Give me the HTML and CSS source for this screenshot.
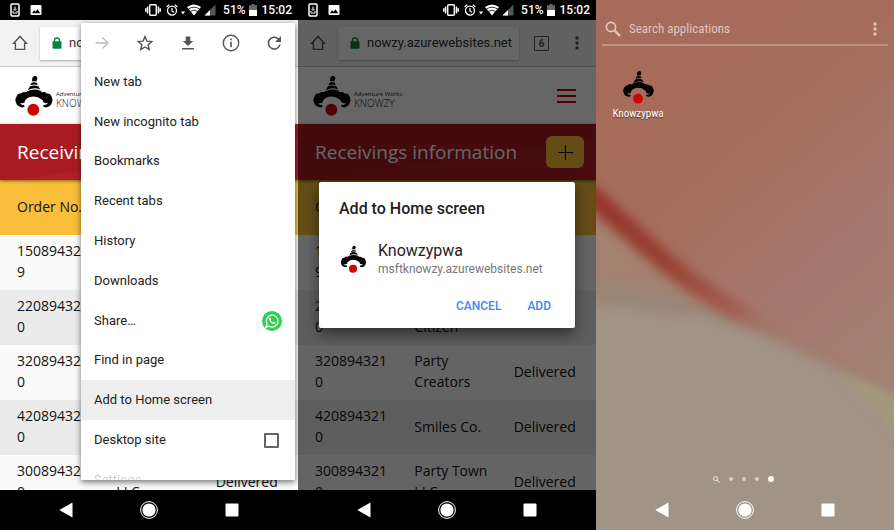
FILE: index.html
```html
<!DOCTYPE html>
<html lang="en">
<head>
<meta charset="utf-8">
<meta name="viewport" content="width=device-width, initial-scale=1">
<title>Knowzy – Add to Home screen</title>
<link rel="stylesheet" href="styles.css">
</head>
<body>
<svg class="sprite" aria-hidden="true">
  <symbol id="logo" viewBox="44 220 114 124">
    <path d="M96 240C94 231 97 223 104 223C111 223 113 231 109 236L109 240C105 239 100 239 96 240Z"/>
    <path d="M93 244Q101 240 110 244L112 250Q101 247 90 251Z"/>
    <path d="M89 254Q101 249 114 254L120 264Q101 256 82 266Z"/>
    <path d="M81 269Q101 259 121 268L125 273Q101 264 77 274Z"/>
    <path d="M75 272Q100 264 126 272Q134 270 140 276Q151 275 154 286Q159 294 155 304Q151 317 136 318L129 315L130 310Q141 312 143 304Q134 308 128 301Q131 298 124 294Q114 285 100 285Q84 285 76 295Q71 298 74 302Q66 308 59 304Q60 312 70 310L73 315L67 318Q51 317 47 305Q42 294 48 286Q51 275 61 276Q67 269 75 272Z"/>
    <circle cx="99" cy="325" r="18" fill="#cc0505"/>
  </symbol>
  <symbol id="home" viewBox="0 0 16 16"><path d="M1.500 8.400L8 1.400L14.500 8.400H12.600V14.400H3.400V8.400Z" fill="none" stroke="currentColor" stroke-width="1.400"/></symbol>
  <symbol id="lock" viewBox="0 0 10 12"><path d="M2.500 5V3.500a2.500 2.500 0 0 1 5 0V5" fill="none" stroke="currentColor" stroke-width="1.300"/><rect x=".5" y="4.300" width="9" height="7.400" rx="1"/></symbol>
  <symbol id="dots" viewBox="0 0 4 14"><circle cx="2" cy="2" r="1.700"/><circle cx="2" cy="7" r="1.700"/><circle cx="2" cy="12" r="1.700"/></symbol>
  <symbol id="search" viewBox="0 0 16 16"><circle cx="6" cy="6" r="4.600" fill="none" stroke="currentColor" stroke-width="1.700"/><path d="M9.400 9.400L15 15" stroke="currentColor" stroke-width="2.200"/></symbol>
  <symbol id="st-phone" viewBox="0 0 10 14"><rect x="1" y="1" width="8" height="12" rx="1" fill="none" stroke="currentColor" stroke-width="1.500"/><path d="M5 3.500V7M3.300 5.800L5 7.500L6.700 5.800M3 8v2h4V8" fill="none" stroke="currentColor" stroke-width="1"/></symbol>
  <symbol id="st-image" viewBox="0 0 12 12"><path fill-rule="evenodd" d="M1.500 1h9a1 1 0 0 1 1 1v8a1 1 0 0 1-1 1h-9a1 1 0 0 1-1-1V2a1 1 0 0 1 1-1ZM2 9.200H10.200L7.500 5.300L5.500 7.800L4 6.300Z"/></symbol>
  <symbol id="st-vibrate" viewBox="0 0 16 12"><rect x="4.700" y=".7" width="6.600" height="10.600" rx="1" fill="none" stroke="currentColor" stroke-width="1.400"/><path d="M2.600 2.500v7M13.400 2.500v7M.8 4.200v3.600M15.200 4.200v3.600" stroke="currentColor" stroke-width="1.500"/></symbol>
  <symbol id="st-alarm" viewBox="0 0 12 12"><circle cx="6" cy="6.600" r="4.500" fill="none" stroke="currentColor" stroke-width="1.300"/><path d="M6 4v3l2 1.200M.6 3L3.200.8M11.400 3L8.800.8" fill="none" stroke="currentColor" stroke-width="1.200"/></symbol>
  <symbol id="st-wifi" viewBox="0 0 20 12"><path d="M0 7.500h4L2 10.500Z"/><path d="M6 3Q13 -2 20 3L13 11.500Z"/><path d="M7.400 5Q13 1.400 18.600 5M9.400 7.400Q13 5 16.600 7.400" fill="none" stroke="#000" stroke-width=".8"/></symbol>
  <symbol id="st-signal" viewBox="0 0 12 12"><path d="M11.500 .5V11.500H.5Z" fill="#555"/><path d="M6 6V11.500H.5Z"/></symbol>
  <symbol id="st-battery" viewBox="0 0 8 12"><path d="M2.500 0h3v1.300H8V12H0V1.300h2.500Z" fill="#666"/><path d="M0 6h8v6H0Z"/></symbol>
  <symbol id="back" viewBox="0 0 14 16"><path d="M13.500 .5V15.500L.3 8Z"/></symbol>
  <symbol id="circle" viewBox="0 0 18 18"><circle cx="9" cy="9" r="8.400" fill="none" stroke="currentColor" stroke-width="1"/><circle cx="9" cy="9" r="6.600"/></symbol>
  <symbol id="square" viewBox="0 0 14 14"><rect x=".5" y=".5" width="13" height="13" rx="1"/></symbol>
</svg>

<main class="phones">
  <section class="phone" aria-label="Browser menu">
    <div class="status">
      <svg class="i-phone"><use href="#st-phone"/></svg><svg class="i-image"><use href="#st-image"/></svg>
      <span class="spacer"></span>
      <svg class="i-vibrate"><use href="#st-vibrate"/></svg><svg class="i-12"><use href="#st-alarm"/></svg><svg class="i-wifi"><use href="#st-wifi"/></svg><svg class="i-12"><use href="#st-signal"/></svg>
      <span class="percent">51%</span><svg class="i-battery"><use href="#st-battery"/></svg><span>15:02</span>
    </div>
    <div class="screen">
      <div class="toolbar">
        <button class="plain" aria-label="Home"><svg class="i-16"><use href="#home"/></svg></button>
        <div class="omnibox"><svg class="lock"><use href="#lock"/></svg><input type="text" dir="rtl" aria-label="Address" value="msftknowzy.azurewebsites.net"></div>
        <button class="tabs" aria-label="Open tabs">6</button>
        <button class="plain" aria-label="Menu"><svg class="i-dots"><use href="#dots"/></svg></button>
      </div>
      <div class="site-header">
        <svg class="logo"><use href="#logo"/></svg>
        <div class="brand"><span class="brand-top">Adventure Works</span><span class="brand-name">KNOWZY</span></div>
        <button class="burger" aria-label="Navigation"><i></i><i></i><i></i></button>
      </div>
      <div class="banner"><h1>Receivings information</h1><button class="plus" aria-label="New receiving"></button></div>
      <table class="orders">
        <thead><tr><th>Order No.</th><th></th><th></th></tr></thead>
        <tbody>
          <tr><td>1508943219</td><td></td><td></td></tr>
          <tr><td>2208943210</td><td><br>Citizen</td><td></td></tr>
          <tr><td>3208943210</td><td>Party Creators</td><td>Delivered</td></tr>
          <tr><td>4208943210</td><td>Smiles Co.</td><td>Delivered</td></tr>
          <tr><td>3008943210</td><td>Party Town LLC</td><td>Delivered</td></tr>
        </tbody>
      </table>
      <div class="menu">
        <div class="menu-icons">
          <button class="plain off" aria-label="Forward"><svg class="i-16" viewBox="0 0 16 16"><path d="M1.500 8H14M8.500 2.500L14 8L8.500 13.500" fill="none" stroke="currentColor" stroke-width="1.300"/></svg></button>
          <button class="plain" aria-label="Bookmark"><svg class="i-16" viewBox="0 0 16 16"><path d="M8 1.500L9.900 6.100L14.800 6.500L11.100 9.700L12.200 14.500L8 12L3.800 14.500L4.900 9.700L1.200 6.500L6.100 6.100Z" fill="none" stroke="currentColor" stroke-width="1.400"/></svg></button>
          <button class="plain" aria-label="Download"><svg class="i-16" viewBox="0 0 16 16"><path d="M5.700 1.500h4.600V6h3L8 11L2.700 6h3ZM2 13h12v1.500H2Z"/></svg></button>
          <button class="plain" aria-label="Page info"><svg class="i-18" viewBox="0 0 18 18"><circle cx="9" cy="9" r="7.700" fill="none" stroke="currentColor" stroke-width="1.400"/><path d="M8.200 4.600h1.600v1.600H8.200ZM8.200 7.700h1.600v5.600H8.200Z"/></svg></button>
          <button class="plain" aria-label="Reload"><svg class="i-16" viewBox="0 0 16 16"><path d="M12.500 4A5.900 5.900 0 1 0 14 9.600" fill="none" stroke="currentColor" stroke-width="1.600"/><path d="M15 1V7H9Z"/></svg></button>
        </div>
        <button class="item">New tab</button>
        <button class="item">New incognito tab</button>
        <button class="item">Bookmarks</button>
        <button class="item">Recent tabs</button>
        <button class="item">History</button>
        <button class="item">Downloads</button>
        <button class="item">Share…<svg class="whatsapp" viewBox="0 0 20 20"><circle cx="10" cy="10" r="10" fill="#2fd04e"/><path d="M4 16.200L5 12.900A5.900 5.900 0 1 1 7.300 15.200Z" fill="none" stroke="#fff" stroke-width="1.300"/><path d="M7.700 6.800C6.100 8.200 8 11 9.800 12.200C11.500 13.400 13 13 13.300 11.400L11.600 10.500L10.700 11.400Q9.200 10.700 8.500 9.300L9.200 8.500L8.500 6.800Z" fill="#fff"/></svg></button>
        <button class="item">Find in page</button>
        <button class="item active">Add to Home screen</button>
        <label class="item">Desktop site<input type="checkbox"></label>
        <div class="peek"><button class="item">Settings</button></div>
      </div>
    </div>
    <nav class="nav"><button class="plain" aria-label="Back"><svg class="i-back"><use href="#back"/></svg></button><button class="plain" aria-label="Home"><svg class="i-18"><use href="#circle"/></svg></button><button class="plain" aria-label="Recents"><svg class="i-square"><use href="#square"/></svg></button></nav>
  </section>

  <section class="phone" aria-label="Add to Home screen prompt">
    <div class="status">
      <svg class="i-phone"><use href="#st-phone"/></svg><svg class="i-image"><use href="#st-image"/></svg>
      <span class="spacer"></span>
      <svg class="i-vibrate"><use href="#st-vibrate"/></svg><svg class="i-12"><use href="#st-alarm"/></svg><svg class="i-wifi"><use href="#st-wifi"/></svg><svg class="i-12"><use href="#st-signal"/></svg>
      <span class="percent">51%</span><svg class="i-battery"><use href="#st-battery"/></svg><span>15:02</span>
    </div>
    <div class="screen">
      <div class="toolbar">
        <button class="plain" aria-label="Home"><svg class="i-16"><use href="#home"/></svg></button>
        <div class="omnibox"><svg class="lock"><use href="#lock"/></svg><input type="text" dir="rtl" aria-label="Address" value="msftknowzy.azurewebsites.net"></div>
        <button class="tabs" aria-label="Open tabs">6</button>
        <button class="plain" aria-label="Menu"><svg class="i-dots"><use href="#dots"/></svg></button>
      </div>
      <div class="site-header">
        <svg class="logo"><use href="#logo"/></svg>
        <div class="brand"><span class="brand-top">Adventure Works</span><span class="brand-name">KNOWZY</span></div>
        <button class="burger" aria-label="Navigation"><i></i><i></i><i></i></button>
      </div>
      <div class="banner"><h1>Receivings information</h1><button class="plus" aria-label="New receiving"></button></div>
      <table class="orders">
        <thead><tr><th>Order No.</th><th></th><th></th></tr></thead>
        <tbody>
          <tr><td>1508943219</td><td></td><td></td></tr>
          <tr><td>2208943210</td><td><br>Citizen</td><td></td></tr>
          <tr><td>3208943210</td><td>Party Creators</td><td>Delivered</td></tr>
          <tr><td>4208943210</td><td>Smiles Co.</td><td>Delivered</td></tr>
          <tr><td>3008943210</td><td>Party Town LLC</td><td>Delivered</td></tr>
        </tbody>
      </table>
      <div class="scrim">
        <div class="dialog" role="dialog" aria-labelledby="dialog-title">
          <h2 id="dialog-title">Add to Home screen</h2>
          <div class="app">
            <svg class="app-icon"><use href="#logo"/></svg>
            <div><p class="app-name">Knowzypwa</p><p class="app-url">msftknowzy.azurewebsites.net</p></div>
          </div>
          <div class="actions"><button>CANCEL</button><button>ADD</button></div>
        </div>
      </div>
    </div>
    <nav class="nav"><button class="plain" aria-label="Back"><svg class="i-back"><use href="#back"/></svg></button><button class="plain" aria-label="Home"><svg class="i-18"><use href="#circle"/></svg></button><button class="plain" aria-label="Recents"><svg class="i-square"><use href="#square"/></svg></button></nav>
  </section>

  <section class="phone launcher" aria-label="App launcher">
    <svg class="wallpaper" viewBox="0 0 298 530" preserveAspectRatio="none" aria-hidden="true">
      <defs>
        <linearGradient id="sky" gradientUnits="userSpaceOnUse" x1="40" y1="60" x2="300" y2="370"><stop offset="0" stop-color="#a76b5b"/><stop offset=".3" stop-color="#a56c5a"/><stop offset=".65" stop-color="#a6786d"/><stop offset="1" stop-color="#a48172"/></linearGradient>
        <linearGradient id="band" gradientUnits="userSpaceOnUse" x1="0" y1="200" x2="178" y2="328"><stop offset="0" stop-color="#953629"/><stop offset=".45" stop-color="#984336"/><stop offset=".8" stop-color="#a15a4d" stop-opacity=".8"/><stop offset="1" stop-color="#a5695e" stop-opacity="0"/></linearGradient>
        <filter id="soft" x="-20%" y="-20%" width="140%" height="140%" color-interpolation-filters="sRGB"><feGaussianBlur stdDeviation="6"/></filter>
        <filter id="soft-band" x="-20%" y="-20%" width="140%" height="140%" color-interpolation-filters="sRGB"><feGaussianBlur stdDeviation="5"/></filter>
      </defs>
      <rect width="298" height="530" fill="url(#sky)"/>
      <path d="M-30 190L0 218L40 252L80 284L120 310L150 327L200 350L240 369L330 418V570H-30Z" fill="#a2826f" filter="url(#soft)"/>
      <path d="M-30 277L0 284L60 290L120 312L150 328L200 351L240 371L330 420V570H-30Z" fill="#998676" filter="url(#soft)"/>
      <path d="M-30 302L0 304L60 312L110 316L150 329L200 352L240 371L330 420V570H-30Z" fill="#a29387" filter="url(#soft)"/>
      <path d="M240 373Q275 381 320 408V455Q282 408 240 373Z" fill="#a39a7b" filter="url(#soft-band)"/>
      <path d="M-30 172L0 200L33 229L67 260L100 285L133 307L178 330" fill="none" stroke="url(#band)" stroke-width="19" filter="url(#soft-band)"/>
    </svg>
    <div class="drawer">
      <label class="search"><svg class="i-16"><use href="#search"/></svg><input type="text" placeholder="Search applications"><svg class="i-dots"><use href="#dots"/></svg></label>
      <div class="apps"><a class="shortcut" href="#"><svg class="shortcut-icon"><use href="#logo"/></svg>Knowzypwa</a></div>
      <div class="pager"><svg class="i-pager"><use href="#search"/></svg><i></i><i></i><i></i><i class="current"></i></div>
    </div>
    <nav class="nav"><button class="plain" aria-label="Back"><svg class="i-back"><use href="#back"/></svg></button><button class="plain" aria-label="Home"><svg class="i-18"><use href="#circle"/></svg></button><button class="plain" aria-label="Recents"><svg class="i-square"><use href="#square"/></svg></button></nav>
  </section>
</main>
</body>
</html>
```
FILE: styles.css
```css
* { box-sizing: border-box; }
body { margin: 0; font-family: Roboto, "Liberation Sans", sans-serif; color: #222; }
h1, h2, p { margin: 0; font-weight: 400; }
button { font: inherit; color: inherit; border: 0; padding: 0; background: none; cursor: pointer; }
svg { display: block; flex: none; fill: currentColor; }
.sprite { position: absolute; width: 0; height: 0; }
.plain { display: flex; align-items: center; justify-content: center; }

.phones { display: grid; grid-template-columns: repeat(3, 1fr); height: 100vh; }
.phone { display: flex; flex-direction: column; min-width: 0; overflow: hidden; background: #000; }
.screen { position: relative; flex: 1; min-height: 0; overflow: hidden; background: #fff; }

.i-12 { width: 12px; height: 12px; }
.i-16 { width: 16px; height: 16px; }
.i-18 { width: 18px; height: 18px; }
.i-dots { width: 4px; height: 14px; }
.i-phone { width: 10px; height: 14px; }
.i-image { width: 12px; height: 12px; margin-left: 7px; }
.i-vibrate { width: 16px; height: 12px; margin-right: 2px; }
.i-wifi { width: 20px; height: 12px; }
.i-battery { width: 8px; height: 12px; }
.i-back { width: 14px; height: 16px; }
.i-square { width: 14px; height: 14px; }
.i-pager { width: 7px; height: 7px; }

/* Android system bars */
.status { display: flex; align-items: center; gap: 3px; height: 20px; padding: 0 6px 0 10px; color: #fff; font-size: 12px; font-weight: 500; line-height: 20px; }
.spacer { flex: 1; }
.percent { margin-left: 4px; }
.status .i-battery { margin-right: 2px; }
.nav { display: flex; align-items: center; justify-content: space-between; height: 40px; padding: 0 59px; color: #fff; }

/* Browser toolbar */
.toolbar { display: flex; align-items: center; height: 47px; padding: 0 17px 0 12px; background: #f2f2f2; border-bottom: 1px solid #c8c8c8; color: #555; }
.omnibox { display: flex; align-items: center; flex: 1; min-width: 0; height: 33px; margin: 0 15px 0 12px; padding: 0 7px 0 12px; background: #fff; border-radius: 1px; box-shadow: 0 1px 2px rgba(0, 0, 0, .3); }
.lock { width: 10px; height: 12px; color: #0b8043; }
.omnibox input { flex: 1; min-width: 0; width: 0; margin-left: 7px; padding: 0; border: 0; outline: 0; background: none; font: 13px/20px Roboto, sans-serif; color: #333; }
.tabs { width: 15px; height: 15px; margin-right: 26px; border: 1px solid #555; border-radius: 1px; font-size: 10px; font-weight: 700; line-height: 13px; }

/* Knowzy site */
.site-header { display: flex; align-items: center; height: 57px; padding: 0 20px 0 15px; }
.logo { width: 38px; height: 41px; color: #000; }
.brand { display: flex; flex-direction: column; flex: 1; margin: 7px 0 0 3px; font-family: "Open Sans", sans-serif; white-space: nowrap; color: #222; }
.brand-top { font-size: 6px; line-height: 8px; }
.brand-name { font-size: 10px; line-height: 10px; font-weight: 300; }
.burger { display: flex; flex-direction: column; gap: 4px; width: 19px; }
.burger i { height: 2px; background: #d0021b; }
.banner { position: relative; display: flex; align-items: center; justify-content: space-between; height: 56px; padding: 0 12px 0 17px; background: linear-gradient(172deg, #a81c21 58%, #b12025 60%); color: #fff; box-shadow: 0 1px 3px rgba(0, 0, 0, .5); }
.banner h1 { font: 19px/28px "Open Sans", sans-serif; white-space: nowrap; }
.plus { width: 38px; height: 32px; border-radius: 6px; background: linear-gradient(#000, #000) center / 15px 1px no-repeat, linear-gradient(#000, #000) center / 1px 15px no-repeat, #f9bf3b; }
.orders { width: 100%; table-layout: fixed; border-collapse: collapse; font: 14px/21px "Open Sans", sans-serif; color: #111; }
.orders th, .orders td { height: 55px; padding: 0 8px 3px 17px; text-align: left; font-weight: 400; overflow-wrap: anywhere; }
.orders thead { background: #f9bf3b; }
.orders tbody tr { background: #fafafa; }
.orders tbody tr:nth-child(even) { background: #ebebeb; }

/* Overflow menu */
.menu { position: absolute; top: 3px; right: 3px; bottom: 10px; width: 214px; display: flex; flex-direction: column; background: #fff; box-shadow: 0 2px 6px rgba(0, 0, 0, .55); }
.menu-icons { display: flex; height: 39px; color: #555; }
.menu-icons button { flex: 1; }
.menu-icons .off { color: #bbb; }
.item { display: flex; align-items: center; justify-content: space-between; flex: 1; min-height: 0; padding: 0 13px; font-size: 13px; line-height: 20px; text-align: left; }
.item.active { background: #eee; }
.item input { appearance: none; width: 15px; height: 15px; margin: 0 3px 0 0; border: 2px solid #666; border-radius: 1px; }
.whatsapp { width: 20px; height: 20px; }
.peek { height: 20px; overflow: hidden; }
.peek .item { height: 40px; background: linear-gradient(#999 30%, #eee 52%); background-clip: text; color: transparent; }

/* Install prompt */
.scrim { position: absolute; inset: 0; display: flex; align-items: center; padding: 0 21px; background: rgba(0, 0, 0, .6); }
.dialog { flex: 1; padding: 16px 16px 10px 20px; background: #fff; border-radius: 2px; box-shadow: 0 6px 14px rgba(0, 0, 0, .5); }
.dialog h2 { font-size: 16px; line-height: 22px; font-weight: 500; }
.app { display: flex; align-items: center; gap: 11px; margin-top: 21px; padding-left: 1px; }
.app-icon { width: 27px; height: 28px; color: #000; }
.app-name { font-size: 16px; line-height: 20px; }
.app-url { font-size: 12px; line-height: 16px; color: #777; }
.actions { display: flex; justify-content: flex-end; gap: 10px; margin-top: 17px; color: #4285f4; font-size: 12px; font-weight: 500; }
.actions button { height: 24px; padding: 0 8px; }

/* Launcher */
.launcher { position: relative; background: #a66b5a; color: #fff; }
.wallpaper { position: absolute; inset: 0; width: 100%; height: 100%; }
.drawer { position: relative; flex: 1; display: flex; flex-direction: column; padding: 14px 6px 0; }
.launcher .nav { position: relative; }
.search { display: flex; align-items: center; height: 32px; padding: 0 11px 0 3px; border-bottom: 2px solid #bd9082; color: #dfc6be; }
.search input { flex: 1; min-width: 0; margin-left: 8px; padding: 0; border: 0; outline: 0; background: none; font: 13px/20px "Roboto Condensed", Roboto, sans-serif; color: inherit; }
.search input::placeholder { color: inherit; opacity: 1; }
.apps { flex: 1; padding-top: 24px; }
.shortcut { display: flex; flex-direction: column; align-items: center; gap: 3px; width: 72px; color: #fff; font: 11px/14px "Roboto Condensed", Roboto, sans-serif; text-decoration: none; text-shadow: 0 1px 1px rgba(0, 0, 0, .5); }
.shortcut-icon { width: 31px; height: 34px; color: #000; }
.pager { display: flex; align-items: center; justify-content: center; gap: 9px; height: 22px; padding-right: 4px; }
.pager i { width: 4px; height: 4px; border-radius: 50%; background: #d9cfca; }
.pager .current { width: 6px; height: 6px; background: #fff; }
```
